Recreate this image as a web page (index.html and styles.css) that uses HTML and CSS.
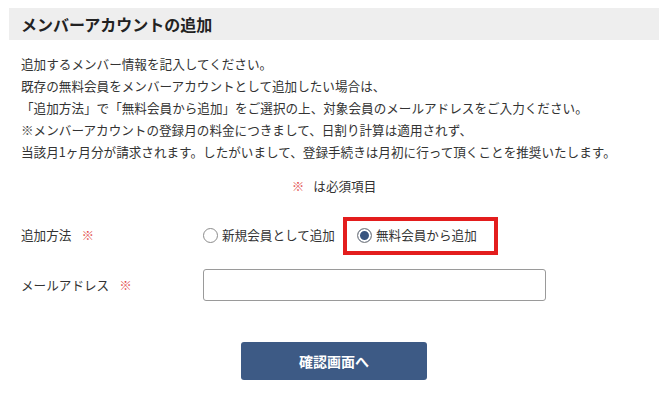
FILE: index.html
```html
<!DOCTYPE html>
<html lang="ja">
<head>
<meta charset="utf-8">
<title>メンバーアカウントの追加</title>
<link rel="stylesheet" href="styles.css">
</head>
<body>
<div class="page">
  <h1 class="title">メンバーアカウントの追加</h1>
  <div class="intro">
    <p>追加するメンバー情報を記入してください。</p>
    <p>既存の無料会員をメンバーアカウントとして追加したい場合は、</p>
    <p>「追加方法」で「無料会員から追加」をご選択の上、対象会員のメールアドレスをご入力ください。</p>
    <p>※メンバーアカウントの登録月の料金につきまして、日割り計算は適用されず、</p>
    <p>当該月1ヶ月分が請求されます。したがいまして、登録手続きは月初に行って頂くことを推奨いたします。</p>
  </div>
  <p class="required-note"><span class="req">※</span>は必須項目</p>
  <form class="form">
    <div class="row">
      <div class="label">追加方法<span class="req">※</span></div>
      <div class="field radios">
        <label class="radio"><input type="radio" name="method"><span>新規会員として追加</span></label>
        <label class="radio highlighted"><input type="radio" name="method" checked><span>無料会員から追加</span></label>
      </div>
    </div>
    <div class="row">
      <div class="label">メールアドレス<span class="req">※</span></div>
      <div class="field"><input class="text-input" type="text"></div>
    </div>
    <div class="actions">
      <button type="button" class="btn">確認画面へ</button>
    </div>
  </form>
</div>
</body>
</html>
```
FILE: styles.css
```css
* { box-sizing: border-box; }
html, body { margin: 0; padding: 0; background: #fff; }
body {
  font-family: "Noto Sans CJK JP", "Noto Sans", sans-serif;
  color: #333;
  font-size: 12.6px;
  line-height: 22px;
}
.page {
  width: 670px;
  padding: 8px 11px 0 9px;
}
.title {
  margin: 0;
  height: 32px;
  line-height: 32px;
  background: #eeeeee;
  padding-left: 12px;
  font-size: 16px;
  font-weight: 700;
  color: #222;
}
.intro {
  margin-top: 13px;
  padding-left: 12px;
}
.intro p { margin: 0; }
.required-note {
  margin: 12px 0 0;
  text-align: center;
}
.required-note .req { margin-right: 9px; }
.req {
  color: #e24a4a;
  margin-left: 10px;
}
.required-note .req { margin-left: 0; }
.form {
  margin-top: 22px;
  padding-left: 12px;
}
.row {
  display: flex;
  align-items: center;
  height: 32px;
  margin-bottom: 18px;
}
.row:last-of-type { margin-bottom: 0; }
.label {
  width: 182px;
  flex: none;
}
.radios {
  display: flex;
  align-items: center;
  gap: 22px;
}
.radio {
  position: relative;
  display: flex;
  align-items: center;
  gap: 4px;
}
.radio input {
  appearance: none;
  -webkit-appearance: none;
  margin: 0;
  width: 15px;
  height: 15px;
  border: 1px solid #8c8c8c;
  border-radius: 50%;
  background: #fff;
}
.radio input:checked {
  background: #3a5680;
  box-shadow: inset 0 0 0 2px #fff;
}
.highlighted::after {
  content: "";
  position: absolute;
  left: -14px;
  top: -7px;
  right: -21px;
  bottom: -9px;
  border: 4px solid #e31d1d;
  pointer-events: none;
}
.text-input {
  display: block;
  width: 343px;
  height: 32px;
  border: 1px solid #9a9a9a;
  border-radius: 3px;
  font: inherit;
  padding: 0 8px;
}
.actions {
  display: flex;
  justify-content: center;
  margin-top: 41px;
  padding-right: 12px;
}
.btn {
  width: 186px;
  height: 38px;
  border: none;
  border-radius: 3px;
  background: #3d5a85;
  color: #fff;
  font-family: "Noto Sans CJK JP", sans-serif;
  font-size: 14px;
  font-weight: 700;
}
```
